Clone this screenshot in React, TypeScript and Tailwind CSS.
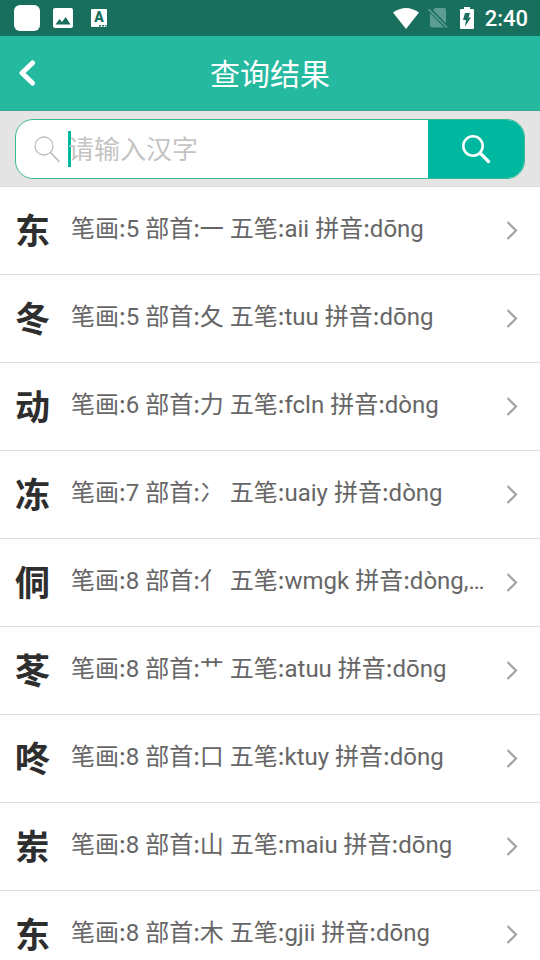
import { useState } from "react";

type Entry = {
  char: string;
  strokes: number;
  radical: string;
  wubi: string;
  pinyin: string;
};

const ENTRIES: Entry[] = [
  { char: "东", strokes: 5, radical: "一", wubi: "aii", pinyin: "dōng" },
  { char: "冬", strokes: 5, radical: "夂", wubi: "tuu", pinyin: "dōng" },
  { char: "动", strokes: 6, radical: "力", wubi: "fcln", pinyin: "dòng" },
  { char: "冻", strokes: 7, radical: "冫", wubi: "uaiy", pinyin: "dòng" },
  { char: "侗", strokes: 8, radical: "亻", wubi: "wmgk", pinyin: "dòng,tóng,tǒng" },
  { char: "苳", strokes: 8, radical: "艹", wubi: "atuu", pinyin: "dōng" },
  { char: "咚", strokes: 8, radical: "口", wubi: "ktuy", pinyin: "dōng" },
  { char: "岽", strokes: 8, radical: "山", wubi: "maiu", pinyin: "dōng" },
  { char: "东", strokes: 8, radical: "木", wubi: "gjii", pinyin: "dōng" },
];

function StatusBar() {
  return (
    <div className="flex h-9 items-center justify-between bg-[#186f5e] pr-3 pl-3.5 text-white">
      <div className="flex items-center">
        <span className="h-[26px] w-[26px] rounded-md bg-white" />
        <svg className="ml-[13px] h-5 w-5" viewBox="0 0 20 20">
          <path
            fill="currentColor"
            fillRule="evenodd"
            d="M2 0h16a2 2 0 0 1 2 2v16a2 2 0 0 1-2 2H2a2 2 0 0 1-2-2V2a2 2 0 0 1 2-2zM2.500 16.500h15L12.700 9 9 14 6.500 11z"
          />
        </svg>
        <span className="ml-[18px] flex h-[18px] w-4 flex-col rounded-[1px] bg-white text-[#186f5e]">
          <span className="text-center font-['Roboto',sans-serif] text-sm leading-4 font-black">A</span>
          <svg className="ml-2 h-0.5 w-2" viewBox="0 0 8 2">
            <path fill="currentColor" d="M0 0h2v1.500H0zM3 0h2v1.500H3zM6 0h1.500v1.500H6z" />
          </svg>
        </span>
      </div>
      <div className="flex items-center">
        <svg className="h-[21px] w-[26px]" viewBox="0 0 26 21">
          <path fill="currentColor" d="M0 4.500Q13-4.500 26 4.500L13 21z" />
        </svg>
        <svg className="ml-[9px] h-5 w-5 text-[#5b9d90]" viewBox="0 0 20 20">
          <path fill="currentColor" d="M7 0h9a2 2 0 0 1 2 2v13.500L5 2zM2 5 16 19.500H4a2 2 0 0 1-2-2z" />
          <path stroke="currentColor" strokeWidth="1.700" d="m0.500 1 18.500 18.500" />
        </svg>
        <svg className="ml-3 h-[22px] w-[14px]" viewBox="0 0 14 22">
          <path
            fill="currentColor"
            fillRule="evenodd"
            d="M4 0h6v2h3a1 1 0 0 1 1 1v18a1 1 0 0 1-1 1H1a1 1 0 0 1-1-1V3a1 1 0 0 1 1-1h3zM5 6h5L8.500 10.500H11L5 19.500 6 13H3z"
          />
        </svg>
        <span className="ml-[11px] pt-0.5 font-['Roboto',sans-serif] text-[22px] leading-8 font-medium">2:40</span>
      </div>
    </div>
  );
}

function SearchBar() {
  const [query, setQuery] = useState("");

  return (
    <form
      className="border-b border-[#dddddd] bg-[#e4e4e4] px-[15px] pt-2 pb-[7px]"
      onSubmit={(e) => e.preventDefault()}
    >
      <div className="flex h-[60px] overflow-hidden rounded-[18px] border border-[#3cb896] bg-white">
        <label htmlFor="query" className="flex min-w-0 flex-1 items-center pl-[18px]">
          <svg className="h-[27px] w-[27px] shrink-0 text-[#bdbdbd]" viewBox="0 0 27 27" fill="none" stroke="currentColor">
            <circle cx="10" cy="10" r="9" strokeWidth="1.300" />
            <path d="m16.500 16.500 9 9.500" strokeWidth="1.800" />
          </svg>
          {query === "" && <span className="ml-[7px] h-9 w-[3px] shrink-0 bg-[#00b89f]" />}
          <input
            id="query"
            type="text"
            aria-label="请输入汉字"
            placeholder="请输入汉字"
            value={query}
            onChange={(e) => setQuery(e.target.value)}
            className="-ml-[3px] h-full min-w-0 flex-1 bg-transparent pt-0.5 text-[26px] text-[#333333] placeholder:text-[#c4c4c4] focus:outline-none"
          />
        </label>
        <button
          type="submit"
          aria-label="搜索"
          className="flex w-24 items-center justify-center bg-[#00b89f] text-white"
        >
          <svg className="h-[30px] w-[30px]" viewBox="0 0 30 30" fill="none" stroke="currentColor" strokeLinecap="round">
            <circle cx="12" cy="12" r="9.700" strokeWidth="2.600" />
            <path d="m19.500 19.500 8 8" strokeWidth="3.200" />
          </svg>
        </button>
      </div>
    </form>
  );
}

// label and its colon share the CJK face, the value after it is Roboto
function Field({ label, value }: { label: string; value: string | number }) {
  return (
    <>
      <span className="font-['Noto_Sans_CJK_SC',sans-serif]">{label}:</span>
      {value}
    </>
  );
}

export default function App() {
  return (
    <div className="h-screen overflow-hidden bg-white font-['Roboto','Noto_Sans_CJK_SC',sans-serif]" lang="zh-CN">
      <StatusBar />
      <header className="grid h-[75px] grid-cols-[60px_1fr_60px] items-center border-b border-[#3aa596] bg-[#25b99f] text-white">
        <button type="button" aria-label="返回" className="flex h-full items-center pl-[18px]">
          <svg className="h-[26px] w-[18px]" viewBox="0 0 18 26" fill="none" stroke="currentColor">
            <path d="M14.500 3 4 13l10.500 10" strokeWidth="5" strokeLinecap="round" strokeLinejoin="round" />
          </svg>
        </button>
        <h1 className="pt-1 text-center text-[30px] leading-10">查询结果</h1>
      </header>
      <SearchBar />
      <ul>
        {ENTRIES.map((e) => (
          <li key={e.char + e.wubi} className="border-b border-[#dddddd]">
            <a href={`#${e.wubi}`} className="flex h-[87px] items-center pr-[22px] pl-[15px]">
              <span className="w-14 shrink-0 pt-1 text-[35px] leading-10 font-bold text-[#2e2e2e]">{e.char}</span>
              <span className="min-w-0 flex-1 truncate pb-1.5 text-2xl leading-10 text-[#666666]">
                <Field label="笔画" value={e.strokes} /> <Field label="部首" value={e.radical} />{" "}
                <Field label="五笔" value={e.wubi} /> <Field label="拼音" value={e.pinyin} />
              </span>
              <svg className="ml-[19px] h-5 w-3 shrink-0 text-[#a3a3a3]" viewBox="0 0 12 20" fill="none" stroke="currentColor">
                <path d="m1.500 1 8.500 8.500-8.500 8.500" strokeWidth="2.200" />
              </svg>
            </a>
          </li>
        ))}
      </ul>
    </div>
  );
}
